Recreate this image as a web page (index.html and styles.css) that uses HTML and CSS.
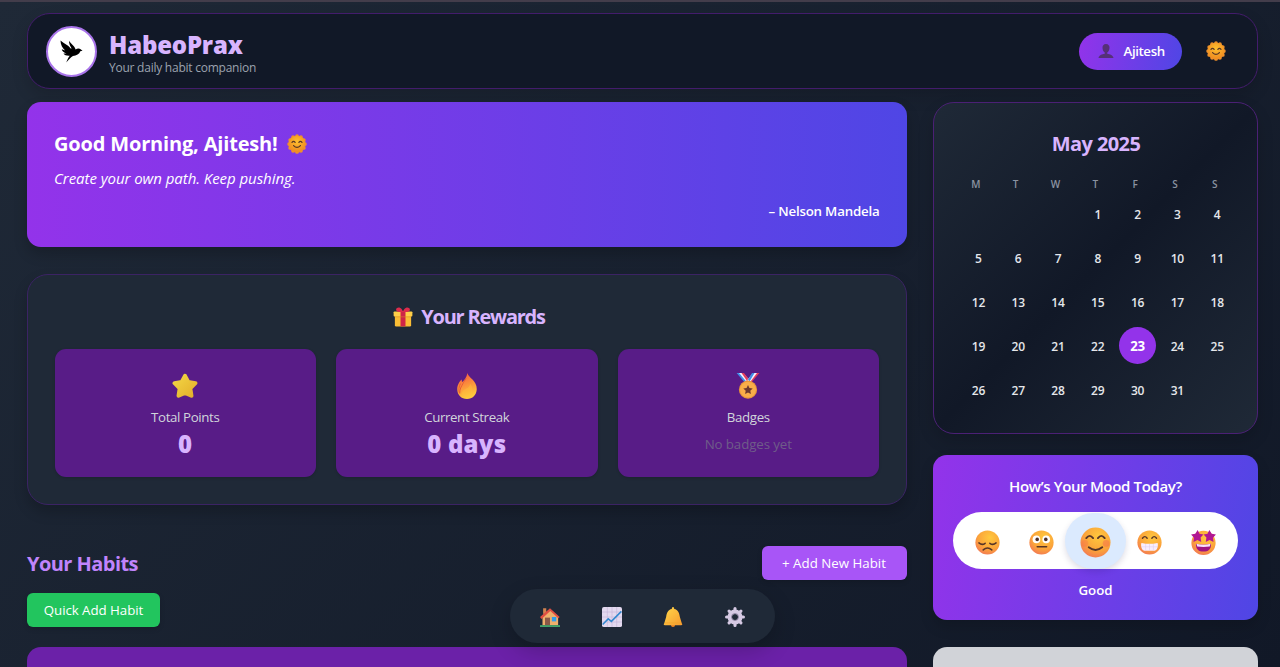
FILE: index.html
```html
<!DOCTYPE html>
<html lang="en">
<head>
<meta charset="utf-8">
<title>HabeoPrax</title>
<link rel="stylesheet" href="styles.css">
</head>
<body>
<svg class="defs" aria-hidden="true">
  <defs>
    <radialGradient id="face" cx=".6" cy=".3" r=".8"><stop offset="0" stop-color="#ffc83d"/><stop offset=".6" stop-color="#fba33a"/><stop offset="1" stop-color="#f0705a"/></radialGradient>
    <radialGradient id="sunfill" cx=".5" cy=".35" r=".7"><stop offset="0" stop-color="#ffc02e"/><stop offset="1" stop-color="#ee861f"/></radialGradient>
    <linearGradient id="flame" x1="0" y1="0" x2=".3" y2="1"><stop offset="0" stop-color="#f0504a"/><stop offset=".5" stop-color="#fb8b3b"/><stop offset="1" stop-color="#ffc93c"/></linearGradient>
    <linearGradient id="bellfill" x1="0" y1="0" x2="1" y2="1"><stop offset="0" stop-color="#ffd84a"/><stop offset="1" stop-color="#f79a2e"/></linearGradient>
    <linearGradient id="starfill" x1="0" y1="0" x2="1" y2="1"><stop offset="0" stop-color="#f3d544"/><stop offset="1" stop-color="#e3b02b"/></linearGradient>
    <symbol id="sun" viewBox="0 0 32 32">
      <g fill="#f0912a"><circle cx="16" cy="16" r="13.8"/><circle cx="16" cy="3.400" r="3"/><circle cx="22.300" cy="5.100" r="3"/><circle cx="26.900" cy="9.700" r="3"/><circle cx="28.600" cy="16" r="3"/><circle cx="26.900" cy="22.300" r="3"/><circle cx="22.300" cy="26.900" r="3"/><circle cx="16" cy="28.600" r="3"/><circle cx="9.700" cy="26.900" r="3"/><circle cx="5.100" cy="22.300" r="3"/><circle cx="3.400" cy="16" r="3"/><circle cx="5.100" cy="9.700" r="3"/><circle cx="9.700" cy="5.100" r="3"/></g>
      <circle cx="16" cy="16" r="13" fill="url(#sunfill)"/>
      <path d="M8 13.500q2.500-3.500 5 0M19 13.500q2.500-3.500 5 0M10.500 18.500q5.500 6 11 0" fill="none" stroke="#5a3825" stroke-width="1.900" stroke-linecap="round"/>
    </symbol>
    <symbol id="person" viewBox="0 0 32 32"><path d="M16 2c-5 0-7 3.500-7 7.500 0 4.500 2 8 4.500 9.500v2.500C8 22.500 2 24 1 30h30c-1-6-7-7.500-12.500-8.500V19c2.500-1.500 4.500-5 4.500-9.500C23 5.500 21 2 16 2z" fill="#553078"/></symbol>
    <symbol id="gift" viewBox="0 0 32 32">
      <rect x="3" y="12" width="26" height="19" rx="2" fill="#f9bd35"/><rect x="1" y="7" width="30" height="8" rx="1.500" fill="#ffcf48"/>
      <path d="M12 7h8v24h-8z" fill="#cf2447"/><path d="M16 8C12 8 6 8 5 5S8 0 11 1s5 5 5 7zM16 8c4 0 10 0 11-3S24 0 21 1s-5 5-5 7z" fill="#dd2c4c"/><path d="M3 15h26v1.500H3z" fill="#d88924" opacity=".6"/>
    </symbol>
    <symbol id="star" viewBox="0 0 32 32"><path d="M16 3.500 20 11l8.800 1.500-6.300 6.300 1.400 9.200L16 24.500 8.100 28l1.400-9.200-6.300-6.300L12 11z" fill="url(#starfill)" stroke="url(#starfill)" stroke-width="5" stroke-linejoin="round"/></symbol>
    <symbol id="fire" viewBox="0 0 32 32"><path d="M16.500 0c1 6 12 9 11.500 20-.3 7-5 12-12 12S4 27 4 20c0-6 3-9 5-12 .8 1 .8 2 .8 3.500C13 9 15.500 5 16.500 0z" fill="url(#flame)"/><path d="M8 13c-3 6-2 10-1 12 0-6 2-8 4-12 1-2 2-4 4-6" fill="none" stroke="#e65a38" stroke-width="1.200"/><path d="M20 13c4 5 5 16-4 17-7 0-8-6-4-9 4-2 7-3 8-8z" fill="#ffc43c" opacity=".4"/></symbol>
    <symbol id="medal" viewBox="0 0 32 32">
      <path d="M2 0h8l8 10-5 3z" fill="#3f8fe8"/><path d="M5 0h5l8 9-3 3z" fill="#f4efff"/><path d="M8 0h3l6 8-2 2z" fill="#e43d5d"/>
      <path d="M30 0h-8l-8 10 5 3z" fill="#e43d5d"/><path d="M27 0h-5l-7 9 3 3z" fill="#f4efff"/><path d="M24 0h-3l-5 8 2 2z" fill="#3f8fe8"/>
      <circle cx="16" cy="20.500" r="11.200" fill="#e8963a"/><circle cx="16" cy="20.500" r="9.800" fill="#f9ae49"/>
      <path d="m16 14.800 1.800 3.700 4 .5-3 2.800.8 4-3.600-1.900-3.600 1.900.8-4-3-2.800 4-.5z" fill="#6d3a2e"/>
    </symbol>
    <symbol id="sad" viewBox="0 0 32 32"><circle cx="16" cy="16" r="15.500" fill="url(#face)"/><path d="M5 16.500q4 3.500 8 .5M19 17q4 3 8-.5M10.500 25.500q5.500-5 11 0" fill="none" stroke="#563528" stroke-width="1.900" stroke-linecap="round"/></symbol>
    <symbol id="neutral" viewBox="0 0 32 32"><circle cx="16" cy="16" r="15.500" fill="url(#face)"/><circle cx="9.500" cy="12" r="4.900" fill="#fff"/><circle cx="22" cy="12" r="4.900" fill="#fff"/><circle cx="10.500" cy="12" r="2.300" fill="#4b302c"/><circle cx="21.500" cy="12" r="2.300" fill="#4b302c"/><path d="M10.500 21.500h12" stroke="#563528" stroke-width="2" stroke-linecap="round"/></symbol>
    <symbol id="smile" viewBox="0 0 32 32"><circle cx="16" cy="16" r="15.500" fill="url(#face)"/><circle cx="5" cy="17" r="3.500" fill="#f4654f" opacity=".3"/><circle cx="27" cy="17" r="3.500" fill="#f4654f" opacity=".45"/><path d="M6.500 11.500q3.500-4.800 7 0M18.500 11.500q3.500-4.800 7 0M9 21q7 5.500 14 0" fill="none" stroke="#563528" stroke-width="1.900" stroke-linecap="round"/></symbol>
    <symbol id="grin" viewBox="0 0 32 32"><circle cx="16" cy="16" r="15.500" fill="url(#face)"/><path d="M7 10.500q3-4 6 0M19 10.500q3-4 6 0" fill="none" stroke="#563528" stroke-width="1.800" stroke-linecap="round"/><path d="M6 16.500q10 2.500 20 0c1.500 0 1 9.500-3.500 10h-13C5 26 4.500 16.500 6 16.500z" fill="#f8edff"/><path d="M5.500 21.500h21M11 18v8M16 18v8M21 18v8" stroke="#decbe9" stroke-width=".7"/></symbol>
    <symbol id="starry" viewBox="0 0 32 32"><circle cx="16" cy="16.500" r="15.500" fill="url(#face)"/><path d="m8.500 0 2.400 4.800 5 .8-3.600 4 .8 5.600-4.900-2.400-5 2.600.6-5.600-3.700-4 5.400-1zM23.500 0l-2.400 4.800-5 .8 3.600 4-.8 5.600 4.900-2.400 5 2.600-.6-5.600 3.700-4-5.400-1z" fill="#b11792"/><path d="M6.500 17.500q9.500 2.500 19 0C26 25 22 27.500 16 27.500S6 25 6.500 17.500z" fill="#a01381"/><path d="M7 17.500q9 2.500 18 0l-1 3.500q-8 1.200-16 0z" fill="#f8dfff"/></symbol>
    <symbol id="house" viewBox="0 0 32 32"><path d="M5 2h5v9H5z" fill="#d08350"/><path d="M4 14 17 4l12 11v14H4z" fill="#eeb06c"/><path d="m0 16 16-14 15.500 14-2.300 2L16.500 6.500 2.500 19z" fill="#df4e42"/><path d="M8 17h8v12H8z" fill="#8a5947"/><path d="M19 16h7v7h-7z" fill="#329de8"/><path d="M0 29h32v3H0z" fill="#43a26a"/></symbol>
    <symbol id="chart" viewBox="0 0 32 32"><rect width="32" height="32" rx="3" fill="#e3d9ef"/><path d="M8.500 0v32M16 0v32M23.500 0v32M0 8h32M0 16h32M0 24h32" stroke="#c5b5d9" stroke-width="1"/><path d="m1 28 9-9 5 4L31 7" fill="none" stroke="#3188cf" stroke-width="2.400"/></symbol>
    <symbol id="bell" viewBox="0 0 32 32"><circle cx="16" cy="29" r="3" fill="#e47d22"/><path d="M14 3q0-3 2-3t2 3c6 1 8 6 9 13l3 10q2 3-1 3H3q-3 0-1-3l3-10c1-7 3-12 9-13z" fill="url(#bellfill)"/><path d="M3 25.500h26" stroke="#f2a62e" stroke-width="1.300"/></symbol>
    <symbol id="gear" viewBox="0 0 32 32"><g fill="none" stroke="#d5c9e3"><circle cx="16" cy="16" r="8.500" stroke-width="7"/><path d="M16 2.500v5M16 24.500v5M2.500 16h5M24.500 16h5M6.500 6.500 9 9M23 23l2.500 2.500M6.500 25.500 9 23M23 9l2.500-2.500" stroke-width="5" stroke-linecap="round"/></g><circle cx="16" cy="16" r="5.600" fill="none" stroke="#8c819f" stroke-width="1.500"/></symbol>
  </defs>
</svg>
<div class="page">
  <header class="topbar">
    <div class="logo"><svg viewBox="0 0 24 24"><path d="M.5.500C4 3.500 8 4.800 11.500 9L12 8.500C10.500 6 9.200 4 9.500.800 11 4 15 5.500 16.300 10c1.700-1.600 4.200-1.400 5.200-.3l2 1.500-2.300.5c-1 3-4 4.500-7.700 4.900-2.500 1.600-5 4.300-6.900 6.900.8-2.800 1.900-5 3.600-7.100-3.100.3-5.400-.6-6.600-2.300l3.200.1C4 13.300 2.300 11.800 1.800 9.700l3.600 1.300C2.500 8.500.6 5 .5.500z"/></svg></div>
    <div class="brand"><h1>HabeoPrax</h1><p>Your daily habit companion</p></div>
    <button class="user"><svg><use href="#person"/></svg><span>Ajitesh</span></button>
    <svg class="theme"><use href="#sun"/></svg>
  </header>
  <div class="columns">
    <main>
      <section class="welcome">
        <h2><span>Good Morning, Ajitesh!</span><svg><use href="#sun"/></svg></h2>
        <p class="quote">Create your own path. Keep pushing.</p>
        <p class="author">– Nelson Mandela</p>
      </section>
      <section class="rewards">
        <h2><svg><use href="#gift"/></svg><span>Your Rewards</span></h2>
        <div class="stats">
          <div class="stat"><svg><use href="#star"/></svg><p class="points">Total Points</p><strong>0</strong></div>
          <div class="stat"><svg><use href="#fire"/></svg><p class="streak">Current Streak</p><strong>0 days</strong></div>
          <div class="stat"><svg><use href="#medal"/></svg><p class="badges">Badges</p><em>No badges yet</em></div>
        </div>
      </section>
      <div class="habits-head"><h2>Your Habits</h2><button class="add">+ Add New Habit</button></div>
      <button class="quick">Quick Add Habit</button>
      <section class="habit-list"></section>
    </main>
    <aside>
      <section class="calendar">
        <h2>May 2025</h2>
        <div class="week"><span>M</span><span>T</span><span>W</span><span>T</span><span>F</span><span>S</span><span>S</span></div>
        <div class="days"><span></span><span></span><span></span><span>1</span><span>2</span><span>3</span><span>4</span><span>5</span><span>6</span><span>7</span><span>8</span><span>9</span><span>10</span><span>11</span><span>12</span><span>13</span><span>14</span><span>15</span><span>16</span><span>17</span><span>18</span><span>19</span><span>20</span><span>21</span><span>22</span><span class="today">23</span><span>24</span><span>25</span><span>26</span><span>27</span><span>28</span><span>29</span><span>30</span><span>31</span></div>
      </section>
      <section class="mood">
        <h3>How’s Your Mood Today?</h3>
        <div class="faces"><span><svg><use href="#sad"/></svg></span><span><svg><use href="#neutral"/></svg></span><span class="chosen"><svg><use href="#smile"/></svg></span><span><svg><use href="#grin"/></svg></span><span><svg><use href="#starry"/></svg></span></div>
        <p>Good</p>
      </section>
      <section class="note"></section>
    </aside>
  </div>
</div>
<nav class="dock"><svg><use href="#house"/></svg><svg><use href="#chart"/></svg><svg><use href="#bell"/></svg><svg><use href="#gear"/></svg></nav>
</body>
</html>
```
FILE: styles.css
```css
* { box-sizing: border-box; margin: 0; padding: 0; }
html, body { height: 667px; overflow: hidden; }
body { font-family: "Open Sans", "Noto Sans", sans-serif; color: #fff; background: linear-gradient(135deg, #1f2937, #111827); border-top: 2px solid #433d4b; }
button { border: 0; color: #fff; font-family: inherit; }
h1, h2, h3, p, button, strong, em, span { white-space: nowrap; }
svg { display: block; flex: none; overflow: visible; }
.defs { position: absolute; width: 0; height: 0; }
.page { height: 665px; overflow: hidden; padding: 11px 22px 0 27px; }

.topbar { height: 76px; display: flex; align-items: center; padding: 0 31px 0 19px; background: #111827; border: 1px solid #431c6c; border-radius: 23px; box-shadow: 0 7px 16px rgba(0,0,0,.15); }
.logo { width: 51px; height: 51px; border: 2px solid #a974ea; border-radius: 50%; background: #fff; display: grid; place-items: center; margin-left: -1px; }
.logo svg { width: 23px; height: 23px; }
.brand { margin-left: 12px; padding-top: 7px; flex: 1; }
.brand h1 { font-size: 24px; line-height: 26px; font-weight: 800; letter-spacing: -.2px; color: #d8b4fe; }
.brand p { font-size: 12px; line-height: 20px; color: #9ca3af; letter-spacing: -.24px; }
.user { width: 103px; height: 37px; border-radius: 19px; display: flex; align-items: center; padding: 0 0 0 19px; background: linear-gradient(100deg, #9333ea, #4f46e5); font-size: 13.3px; font-weight: 600; letter-spacing: -.4px; }
.user svg { width: 16px; height: 16px; margin-right: 9.500px; }
.theme { width: 20px; height: 20px; margin-left: 24px; }

.columns { display: grid; grid-template-columns: 879.5px 325px; gap: 26.5px; margin-top: 13px; }
.welcome { height: 145px; padding: 27px; border-radius: 14px; background: linear-gradient(90deg, #9333ea, #4f46e5); box-shadow: 0 7px 14px rgba(0,0,0,.2); }
.welcome h2 { display: flex; align-items: center; gap: 9.500px; font-size: 20px; line-height: 29px; letter-spacing: -.17px; }
.welcome h2 svg { width: 20px; height: 20px; }
.quote { font-size: 15px; line-height: 22px; font-style: italic; margin-top: 9px; letter-spacing: -.05px; }
.author { font-size: 13.3px; line-height: 20px; font-weight: 600; text-align: right; margin-top: 12px; letter-spacing: -.2px; }

.rewards { height: 231px; margin-top: 27px; padding: 26px 26.500px; border: 1px solid #3b2364; border-radius: 21px; background: #1f2937; box-shadow: 0 7px 14px rgba(0,0,0,.2); }
.rewards h2 { display: flex; justify-content: center; align-items: center; gap: 8.500px; font-size: 20px; line-height: 32px; color: #d8b4fe; letter-spacing: -1.22px; padding-left: 4px; }
.rewards h2 svg { width: 20px; height: 20px; }
.stats { display: grid; grid-template-columns: repeat(3, 1fr); gap: 20px; margin-top: 16px; }
.stat { height: 128px; border-radius: 11px; background: #581c87; display: flex; flex-direction: column; align-items: center; padding-top: 24px; box-shadow: 0 1px 3px rgba(0,0,0,.15); }
.stat svg { width: 26px; height: 26px; }
.stat p { font-size: 13.3px; line-height: 20px; margin-top: 8px; color: #d1d5db; letter-spacing: -.38px; }
.stat strong { font-size: 24px; line-height: 33px; font-weight: 800; color: #d8b4fe; letter-spacing: .25px; }
.stat em { font-size: 13.3px; line-height: 20px; margin-top: 7px; font-style: normal; color: #6f5c89; letter-spacing: -.1px; }

.habits-head { display: flex; justify-content: space-between; align-items: center; height: 34px; margin-top: 40.500px; }
.habits-head h2 { font-size: 20px; color: #c084fc; padding-top: 1px; letter-spacing: -.55px; }
.add, .quick { height: 34px; border-radius: 6px; font-size: 13.3px; text-align: center; letter-spacing: -.05px; box-shadow: 0 2px 5px rgba(0,0,0,.15); }
.add { width: 145px; background: #a855f7; letter-spacing: 0; }
.quick { display: block; width: 133px; margin-top: 13.500px; background: #22c55e; }
.habit-list { height: 60px; margin-top: 20px; border-radius: 14px; background: #6b21a8; }

.calendar { height: 332px; padding: 26px 21px 0 22px; border: 1px solid #4b2075; border-radius: 21px; background: linear-gradient(135deg, #1f2937, #111827 50%, #1f2937); box-shadow: 0 7px 16px rgba(0,0,0,.15); }
.calendar h2 { font-size: 20px; line-height: 30px; text-align: center; color: #d8b4fe; letter-spacing: -.6px; }
.week, .days { display: grid; grid-template-columns: repeat(7, 39.8px); text-align: center; }
.week { margin-top: 16px; font-size: 10px; line-height: 18px; font-weight: 600; color: #8b93a1; }
.days { grid-auto-rows: 43.9px; padding-left: 2.500px; font-size: 12px; font-weight: 600; color: #e5e7eb; align-items: center; letter-spacing: -.2px; }
.days span { height: 37px; line-height: 37px; width: 37px; justify-self: center; }
.days .today { border-radius: 50%; background: #9333ea; color: #fff; font-size: 13.3px; font-weight: 700; line-height: 38px; margin-top: -2px; }

.mood { height: 165px; margin-top: 21px; padding: 19px 20px 0; border-radius: 14px; background: linear-gradient(100deg, #9333ea, #4f46e5); text-align: center; box-shadow: 0 7px 14px rgba(0,0,0,.15); }
.mood h3 { font-size: 15px; line-height: 24px; font-weight: 600; letter-spacing: -.35px; }
.faces { height: 57px; margin-top: 14px; padding: 0 8px; border-radius: 29px; background: #fff; display: grid; grid-template-columns: repeat(5, 53.9px); align-items: center; justify-items: center; }
.faces svg { width: 25px; height: 25px; margin-top: 3px; }
.faces .chosen { width: 61px; height: 56px; border-radius: 28px; background: #dbeafe; display: grid; place-items: center; box-shadow: 0 3px 6px rgba(30,20,80,.15); }
.faces .chosen svg { width: 31px; height: 31px; }
.mood p { font-size: 13.3px; line-height: 20px; font-weight: 600; margin-top: 11px; }
.note { height: 60px; margin-top: 27px; border-radius: 14px; background: #d1d3d8; }

.dock { position: fixed; left: 510px; top: 589px; width: 265px; height: 54px; display: flex; align-items: center; justify-content: space-between; padding: 2px 30px 0; border-radius: 27px; background: #1f2937; box-shadow: 0 8px 22px rgba(0,0,0,.2); }
.dock svg { width: 20px; height: 20px; }
```
